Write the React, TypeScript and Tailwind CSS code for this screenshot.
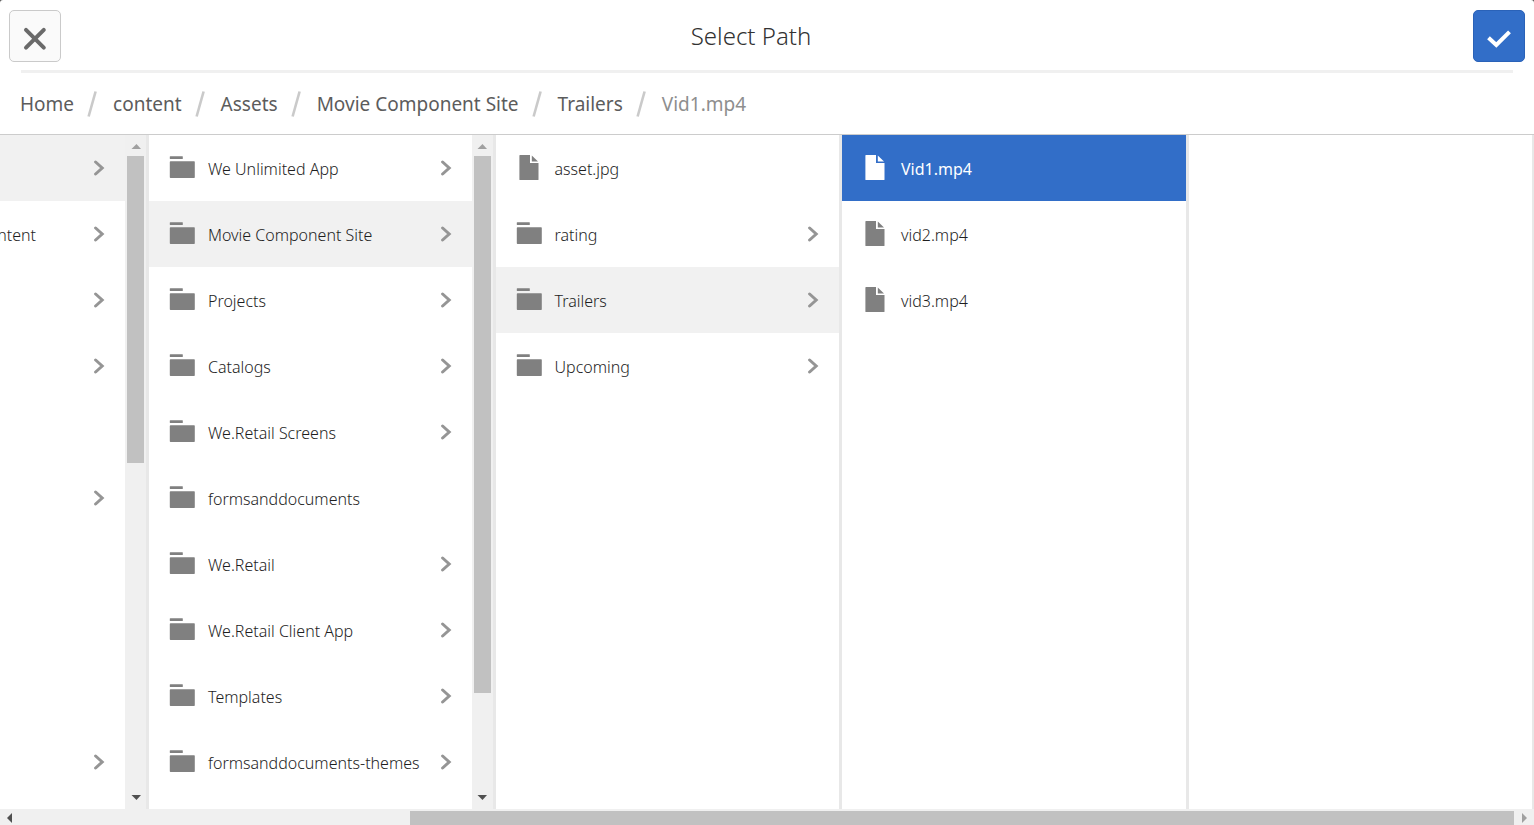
import { useState } from "react";
import clsx from "clsx";

type Item = { name: string; kind?: "folder" | "file" | "none"; more?: boolean };

const crumbs = ["Home", "content", "Assets", "Movie Component Site", "Trailers", "Vid1.mp4"];

const parents: Item[] = [
    { name: "", kind: "none", more: true },
    { name: "ntent", kind: "none", more: true },
    { name: "", kind: "none", more: true },
    { name: "", kind: "none", more: true },
    { name: "", kind: "none" },
    { name: "", kind: "none", more: true },
    { name: "", kind: "none" },
    { name: "", kind: "none" },
    { name: "", kind: "none" },
    { name: "", kind: "none", more: true },
];

const assets: Item[] = [
    { name: "We Unlimited App", more: true },
    { name: "Movie Component Site", more: true },
    { name: "Projects", more: true },
    { name: "Catalogs", more: true },
    { name: "We.Retail Screens", more: true },
    { name: "formsanddocuments" },
    { name: "We.Retail", more: true },
    { name: "We.Retail Client App", more: true },
    { name: "Templates", more: true },
    { name: "formsanddocuments-themes", more: true },
];

const site: Item[] = [
    { name: "asset.jpg", kind: "file" },
    { name: "rating", more: true },
    { name: "Trailers", more: true },
    { name: "Upcoming", more: true },
];

const trailers: Item[] = [
    { name: "Vid1.mp4", kind: "file" },
    { name: "vid2.mp4", kind: "file" },
    { name: "vid3.mp4", kind: "file" },
];

const FolderIcon = () => (
    <svg className="size-[26px] shrink-0" viewBox="0 0 26 26" fill="currentColor" aria-hidden="true">
        <rect x="0.8" y="1.2" width="13" height="2.8" rx="0.5" />
        <rect x="0.8" y="6.2" width="25" height="16.8" rx="0.7" />
    </svg>
);

const FileIcon = () => (
    <svg className="size-[26px] shrink-0" viewBox="0 0 26 26" fill="currentColor" aria-hidden="true">
        <path d="M4 0H14V8H22.5V24.5a.6.6 0 0 1-.6.6H4a.6.6 0 0 1-.6-.6V.6A.6.6 0 0 1 4 0Z" />
        <path d="M15.8 0.4L22 6.4H15.8Z" />
    </svg>
);

const Chevron = () => (
    <svg className="h-4 w-3 shrink-0 text-[#959595]" viewBox="0 0 12 16" fill="none" stroke="currentColor" strokeWidth="3" aria-hidden="true">
        <path d="M2.6 2L9.2 8L2.6 14" strokeLinecap="round" />
    </svg>
);

const Arrow = ({ points, className }: { points: string; className: string }) => (
    <svg className={clsx("size-[10px] shrink-0", className)} viewBox="0 0 10 10" fill="currentColor" aria-hidden="true">
        <polygon points={points} />
    </svg>
);

const ScrollTrack = ({ size }: { size: string }) => (
    <div className="flex w-[21px] shrink-0 flex-col items-center bg-[#f0f0f0]">
        <div className="flex h-[21px] w-full items-center justify-center">
            <Arrow points="0.5,8 5.5,3 10,8" className="text-[#a0a0a0]" />
        </div>
        <div className="w-full flex-1 px-[2px]">
            <div className={clsx("bg-[#c1c1c1]", size)} />
        </div>
        <div className="flex h-[21px] w-full items-center justify-center">
            <Arrow points="0.5,1 5.5,6 10,1" className="text-[#505050]" />
        </div>
    </div>
);

type ColumnProps = {
    label: string;
    items: Item[];
    open?: number;
    selected?: number;
    onSelect?: (index: number) => void;
    thumb?: string;
    className?: string;
};

const Column = ({ label, items, open, selected, onSelect, thumb, className = "min-w-0 flex-1" }: ColumnProps) => (
    <section aria-label={label} className={clsx("flex overflow-hidden border-r-[3px] border-[#e8e8e8]", className)}>
        <ul className="min-w-0 flex-1 overflow-hidden">
            {items.map((item, i) => (
                <li key={i}>
                    <button
                        type="button"
                        onClick={() => onSelect?.(i)}
                        className={clsx(
                            "flex h-[66px] w-full items-center pr-5 text-left text-base",
                            item.kind === "none" ? "pl-0" : "gap-[13px] pl-5",
                            i === selected ? "bg-[#326ec8] font-normal text-white" : "font-light text-[#1e1e1e]",
                            i === open && "bg-[#f1f1f1]"
                        )}
                    >
                        {item.kind !== "none" && (
                            <span className={i === selected ? "text-white" : "text-[#808080]"}>
                                {item.kind === "file" ? <FileIcon /> : <FolderIcon />}
                            </span>
                        )}
                        {item.kind === "none" ? (
                            <span className="flex w-9 justify-end pt-[2px]">{item.name}</span>
                        ) : (
                            <span className="pt-[2px] whitespace-nowrap">{item.name}</span>
                        )}
                        {item.more && (
                            <span className="ml-auto">
                                <Chevron />
                            </span>
                        )}
                    </button>
                </li>
            ))}
        </ul>
        {thumb && <ScrollTrack size={thumb} />}
    </section>
);

const App = () => {
    const [selected, setSelected] = useState(0);

    return (
        <div className="h-screen overflow-hidden bg-[#555] font-['Noto_Sans',sans-serif]">
            <main className="flex h-full flex-col rounded-t-[3px] bg-white">
                <header className="flex items-center justify-between px-[9px] pt-[10px] pb-2">
                    <button type="button" aria-label="Cancel" className="size-[52px] rounded-[5px] border border-[#cacaca] bg-[#fafafa] text-[#6a6a6a]">
                        <svg className="size-[50px]" viewBox="0 0 50 50" fill="none" stroke="currentColor" strokeWidth="4" strokeLinecap="round">
                            <path d="M16 18.8L33.8 36.6M33.8 18.8L16 36.6" />
                        </svg>
                    </button>
                    <h1 className="pr-8 text-2xl font-light text-[#323232]">Select Path</h1>
                    <button type="button" aria-label="Confirm" className="size-[52px] rounded-[5px] border border-[#2a62b8] bg-[#326ec8] text-white">
                        <svg className="size-[50px]" viewBox="0 0 50 50" fill="none" stroke="currentColor" strokeWidth="4">
                            <path d="M14.5 26.8L22.3 34L35.5 20.8" />
                        </svg>
                    </button>
                </header>
                <div className="mx-[21px] h-[3px] shrink-0 bg-[#f0f0f0]" />

                <nav aria-label="Breadcrumb" className="h-[62px] shrink-0 border-b border-[#cccccc] px-5">
                    <ol className="flex h-full items-center text-[19px]">
                        {crumbs.map((crumb, i) => (
                            <li key={crumb} className="flex items-center">
                                {i > 0 && (
                                    <svg className="mr-4 ml-[13px] h-[26px] w-[10px] text-[#cacaca]" viewBox="0 0 10 26" fill="none" stroke="currentColor" strokeWidth="2.6" aria-hidden="true">
                                        <path d="M1.6 25.5L8.6 0.5" />
                                    </svg>
                                )}
                                <a href="#" className={clsx("pt-[2px]", i === crumbs.length - 1 ? "text-[#8e8e8e]" : "text-[#5c5c5c]")}>{crumb}</a>
                            </li>
                        ))}
                    </ol>
                </nav>

                <div className="-mr-px flex min-h-0 flex-1">
                    <Column label="content" items={parents} open={0} thumb="h-[48.5%]" className="w-[149px] shrink-0" />
                    <Column label="Assets" items={assets} open={1} thumb="h-[85%]" />
                    <Column label="Movie Component Site" items={site} open={2} />
                    <Column label="Trailers" items={trailers} selected={selected} onSelect={setSelected} />
                    <Column label="Preview" items={[]} />
                </div>

                <div className="flex h-4 shrink-0 bg-[#f0f0f0] pt-[2px]">
                    <div className="flex w-5 items-center justify-center">
                        <Arrow points="7,0 2,5 7,10" className="text-[#505050]" />
                    </div>
                    <div className="flex flex-1 justify-end">
                        <div className="h-full w-[73.9%] bg-[#c1c1c1]" />
                    </div>
                    <div className="flex w-5 items-center justify-center">
                        <Arrow points="3,0 8,5 3,10" className="text-[#a0a0a0]" />
                    </div>
                </div>
            </main>
        </div>
    );
};

export default App;
